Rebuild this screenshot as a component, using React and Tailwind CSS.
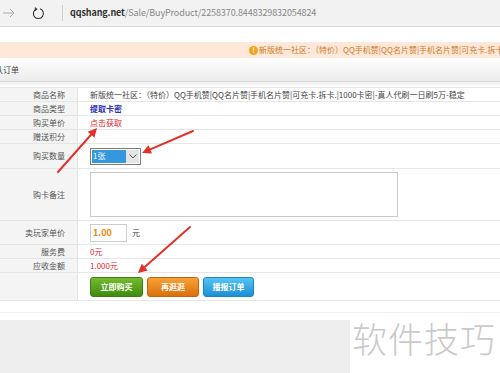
import React from "react";

// Red annotation arrow: line from tail to tip plus filled head
const Arrow = ({ x1, y1, x2, y2 }) => {
  const a = Math.atan2(y2 - y1, x2 - x1);
  const len = 9;
  const w = 4.5;
  const bx = x2 - len * Math.cos(a);
  const by = y2 - len * Math.sin(a);
  const px = -Math.sin(a) * w;
  const py = Math.cos(a) * w;
  const pts = `${x2},${y2} ${bx + px},${by + py} ${bx - px},${by - py}`;
  return (
    <g>
      <line x1={x1} y1={y1} x2={bx} y2={by} stroke="#e2312b" strokeWidth="2" strokeLinecap="round" />
      <polygon points={pts} fill="#e2312b" />
    </g>
  );
};

const Row = ({ label, h, children }) => (
  <div className={`flex border-b border-[#e6e6e6] ${h}`}>
    <div className="w-[78px] shrink-0 bg-[#f4f4f4] border-r border-[#e3e3e3] flex items-center justify-end pr-[12px] text-[8px] text-[#555]">
      {label}
    </div>
    <div className="flex-1 flex items-center pl-[12px] text-[8px] text-[#444]">{children}</div>
  </div>
);

const App = () => {
  return (
    <div className="relative w-[500px] h-[373px] overflow-hidden bg-white font-['Noto_Sans_CJK_SC','Noto_Sans',sans-serif]">
      {/* Browser address bar */}
      <div className="h-[27px] bg-[#f2f2f2] border-b border-[#d6d6d6] flex items-center">
        <svg width="14" height="12" viewBox="0 0 14 12" className="ml-[2px]">
          <path d="M1 6 H12 M8 2 L12 6 L8 10" fill="none" stroke="#a8a8a8" strokeWidth="1" />
        </svg>
        <svg width="13" height="13" viewBox="0 0 13 13" className="ml-[16px]">
          <path d="M8 1.8 A5 5 0 1 1 4.3 2" fill="none" stroke="#333" strokeWidth="1.1" />
          <path d="M2.8 0.8 L4.7 2 L3.2 3.7" fill="none" stroke="#333" strokeWidth="1.1" />
        </svg>
        <div className="ml-[17px] w-px h-[16px] bg-[#cfcfcf]" />
        <div className="ml-[7px] text-[9px] tracking-[-0.1px]">
          <span className="font-bold text-[#333]">qqshang.net</span>
          <span className="text-[#888]">/Sale/BuyProduct/2258370.8448329832054824</span>
        </div>
      </div>

      <div className="h-[15px]" />

      {/* Notice bar */}
      <div className="h-[16px] bg-[#fde8d9] flex items-center pl-[249px] whitespace-nowrap overflow-hidden">
        <span className="w-[9px] h-[9px] rounded-full bg-[#f2a31b] text-white text-[7px] font-bold leading-[9px] text-center shrink-0">
          !
        </span>
        <span className="ml-[1px] text-[8px] text-[#cf7a22]">
          新版统一社区：（特价）QQ手机赞|QQ名片赞|手机名片赞|可充卡.拆卡.|1000卡密|-真人代刷一日刷5万-稳定
        </span>
      </div>

      {/* Section header */}
      <div className="h-[24px] bg-gradient-to-b from-white to-[#ebebeb] border-b border-[#d9d9d9] flex items-center overflow-hidden">
        <span className="ml-[-13px] text-[8px] text-[#444] whitespace-nowrap">确认订单</span>
      </div>

      <div className="h-[5px] bg-gradient-to-b from-[#eeeeee] to-white" />

      {/* Order table */}
      <div className="border-t border-[#e6e6e6]">
        <Row label="商品名称" h="h-[14px]">
          <span className="whitespace-nowrap">
            新版统一社区：（特价）QQ手机赞|QQ名片赞|手机名片赞|可充卡.拆卡.|1000卡密|-真人代刷一日刷5万-稳定
          </span>
        </Row>
        <Row label="商品类型" h="h-[14px]">
          <span className="text-[#2a2fb8] font-bold">提取卡密</span>
        </Row>
        <Row label="购买单价" h="h-[14px]">
          <span className="text-[#e0262a]">点击获取</span>
        </Row>
        <Row label="赠送积分" h="h-[14px]">
          <span />
        </Row>
        <Row label="购买数量" h="h-[25px]">
          <div className="w-[51px] h-[17px] border border-[#7b7b7b] flex items-stretch p-[1px]">
            <div className="flex-1 bg-[#3597dc] text-white text-[8px] flex items-center pl-[1px]">1张</div>
            <div className="w-[13px] bg-[#e4e4e4] flex items-center justify-center">
              <svg width="8" height="5" viewBox="0 0 8 5">
                <path d="M0.5 0.5 L4 4 L7.5 0.5" fill="none" stroke="#555" strokeWidth="1" />
              </svg>
            </div>
          </div>
        </Row>
        <Row label="购卡备注" h="h-[52px]">
          <textarea
            readOnly
            className="w-[308px] h-[45px] border border-[#c9c9c9] resize-none outline-none bg-white"
          />
        </Row>
        <Row label="卖玩家单价" h="h-[24px]">
          <div className="w-[37px] h-[18px] border border-[#cccccc] flex items-center pl-[2px] text-[9px] font-bold text-[#e8890c]">
            1.00
          </div>
          <span className="ml-[5px]">元</span>
        </Row>
        <Row label="服务费" h="h-[14px]">
          <span className="text-[#e0262a]">0元</span>
        </Row>
        <Row label="应收金额" h="h-[14px]">
          <span className="text-[#e0262a]">1.000元</span>
        </Row>
        <Row label="" h="h-[28px]">
          <div className="flex gap-[4px]">
            <button className="w-[53px] h-[20px] rounded-[3px] border border-[#3c7e12] bg-gradient-to-b from-[#74bb2d] to-[#3f8c0f] text-white text-[8px] font-bold">
              立即购买
            </button>
            <button className="w-[52px] h-[20px] rounded-[3px] border border-[#c4650a] bg-gradient-to-b from-[#f6a236] to-[#da700a] text-white text-[8px] font-bold">
              再逛逛
            </button>
            <button className="w-[51px] h-[20px] rounded-[3px] border border-[#1b85c8] bg-gradient-to-b from-[#55c4f2] to-[#1a8fd6] text-white text-[8px] font-bold">
              播报订单
            </button>
          </div>
        </Row>
      </div>

      {/* Footer area */}
      <div className="h-[11px]" />
      <div className="h-[8px] border-t border-[#eeeeee]" />
      <div className="flex h-[54px]">
        <div className="w-[350px] bg-[#eeeeee]" />
        <div className="flex-1 bg-white flex items-start pl-[2px]">
          <span className="text-[35px] leading-[36px] font-light text-[#cacaca] tracking-[1px]">软件技巧</span>
        </div>
      </div>

      {/* Red annotation arrows */}
      <svg className="absolute inset-0 pointer-events-none" width="500" height="373">
        <Arrow x1={58} y1={172} x2={97} y2={128} />
        <Arrow x1={193} y1={131} x2={142} y2={153} />
        <Arrow x1={190} y1={227} x2={138} y2={273} />
      </svg>
    </div>
  );
};

export default App;
